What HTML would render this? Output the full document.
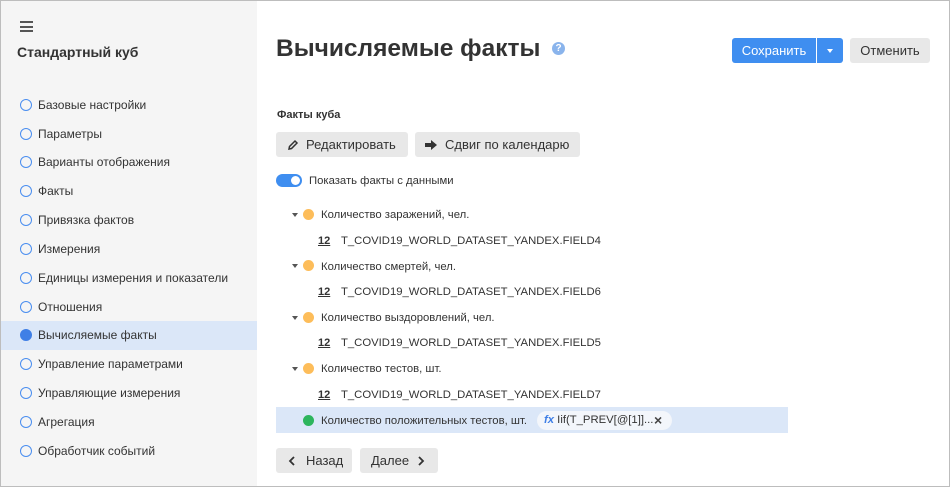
<!DOCTYPE html><html><head><meta charset="utf-8"><style>
*{box-sizing:border-box;margin:0;padding:0}
body{width:950px;height:487px;font-family:"Liberation Sans",sans-serif;color:#333;background:#fff;position:relative;overflow:hidden}
.frame{position:absolute;inset:0;border:1px solid #bdbdbd;pointer-events:none;z-index:9}
.side{position:absolute;left:0;top:0;width:257px;height:487px;background:#f5f5f5}
.ham{position:absolute;left:20px;top:21px;width:13px}
.ham i{display:block;height:2px;background:#555;margin-bottom:2.5px}
.st{position:absolute;left:17px;top:44px;font-size:14px;font-weight:bold;color:#333}
.it{position:absolute;left:0;width:257px;height:29px;font-size:12px;line-height:29px;padding-left:38px;color:#333}
.it:before{content:"";position:absolute;left:20px;top:8px;width:10px;height:10px;border:1.3px solid #4a8ef0;border-radius:50%}
.it.a{background:#dbe7f8}.it.a:before{background:#3f7fe6;border-color:#3f7fe6}
.t{position:absolute;font-size:12px;white-space:nowrap}
.btn{position:absolute;background:#e8e8e8;border-radius:3px;font-size:13px;line-height:25px;height:25px;color:#333}
.dot{position:absolute;width:11px;height:11px;border-radius:50%;background:#fdbd5a}
.arr{position:absolute;width:0;height:0;border-left:3px solid transparent;border-right:3px solid transparent;border-top:4px solid #555}
.n12{position:absolute;font-size:11px;font-weight:bold;text-decoration:underline;color:#333}
.f{font-size:11.3px}
</style></head><body>
<div class="side">
<div class="ham"><i></i><i></i><i></i></div>
<div class="st">Стандартный куб</div>
<div class="it" style="top:91px">Базовые настройки</div>
<div class="it" style="top:120px">Параметры</div>
<div class="it" style="top:148px">Варианты отображения</div>
<div class="it" style="top:177px">Факты</div>
<div class="it" style="top:206px">Привязка фактов</div>
<div class="it" style="top:235px">Измерения</div>
<div class="it" style="top:264px">Единицы измерения и показатели</div>
<div class="it" style="top:293px">Отношения</div>
<div class="it a" style="top:321px">Вычисляемые факты</div>
<div class="it" style="top:350px">Управление параметрами</div>
<div class="it" style="top:379px">Управляющие измерения</div>
<div class="it" style="top:408px">Агрегация</div>
<div class="it" style="top:437px">Обработчик событий</div>
</div>
<div class="t" style="left:276px;top:35px;font-size:24.5px;font-weight:bold;color:#333">Вычисляемые факты</div>
<div style="position:absolute;left:552px;top:42px;width:13px;height:13px;border-radius:50%;background:#8ab4ec;color:#fff;font-size:10px;font-weight:bold;text-align:center;line-height:13px">?</div>
<div class="btn" style="left:732px;top:38px;width:84px;background:#3f8ef0;color:#fff;text-align:center;border-radius:3px 0 0 3px">Сохранить</div>
<div class="btn" style="left:817px;top:38px;width:26px;background:#3f8ef0;border-radius:0 3px 3px 0"><div class="arr" style="left:10px;top:11px;border-top-color:#fff"></div></div>
<div class="btn" style="left:850px;top:38px;width:80px;text-align:center">Отменить</div>
<div class="t" style="left:277px;top:109px;font-size:11px;font-weight:bold">Факты куба</div>
<div class="btn" style="left:276px;top:132px;width:132px;padding-left:30px">Редактировать
<svg style="position:absolute;left:11px;top:7px" width="12" height="12" viewBox="0 0 12 12"><path d="M2 10l.5-2.5L8 2l2 2-5.5 5.5z" fill="none" stroke="#333" stroke-width="1.5"/></svg></div>
<div class="btn" style="left:415px;top:132px;width:165px;padding-left:30px">Сдвиг по календарю
<svg style="position:absolute;left:10px;top:8px" width="12" height="10" viewBox="0 0 12 10"><path d="M0 3h6V0l6 5-6 5V7H0z" fill="#333"/></svg></div>
<div style="position:absolute;left:276px;top:174px;width:26px;height:13px;border-radius:7px;background:#3f8ef0"><div style="position:absolute;right:2px;top:2px;width:9px;height:9px;border-radius:50%;background:#fff"></div></div>
<div class="t f" style="left:309px;top:175px">Показать факты с данными</div>

<div class="arr" style="left:292px;top:213px"></div><div class="dot" style="left:303px;top:209px"></div>
<div class="t f" style="left:321px;top:209px">Количество заражений, чел.</div>
<div class="n12" style="left:318px;top:235px">12</div><div class="t f" style="left:341px;top:235px">T_COVID19_WORLD_DATASET_YANDEX.FIELD4</div>

<div class="arr" style="left:292px;top:264px"></div><div class="dot" style="left:303px;top:260px"></div>
<div class="t f" style="left:321px;top:261px">Количество смертей, чел.</div>
<div class="n12" style="left:318px;top:286px">12</div><div class="t f" style="left:341px;top:286px">T_COVID19_WORLD_DATASET_YANDEX.FIELD6</div>

<div class="arr" style="left:292px;top:316px"></div><div class="dot" style="left:303px;top:312px"></div>
<div class="t f" style="left:321px;top:312px">Количество выздоровлений, чел.</div>
<div class="n12" style="left:318px;top:337px">12</div><div class="t f" style="left:341px;top:337px">T_COVID19_WORLD_DATASET_YANDEX.FIELD5</div>

<div class="arr" style="left:292px;top:367px"></div><div class="dot" style="left:303px;top:363px"></div>
<div class="t f" style="left:321px;top:363px">Количество тестов, шт.</div>
<div class="n12" style="left:318px;top:389px">12</div><div class="t f" style="left:341px;top:389px">T_COVID19_WORLD_DATASET_YANDEX.FIELD7</div>

<div style="position:absolute;left:276px;top:407px;width:512px;height:26px;background:#dbe7f8"></div>
<div class="dot" style="left:303px;top:415px;background:#2db55d"></div>
<div class="t f" style="left:321px;top:415px">Количество положительных тестов, шт.</div>
<div style="position:absolute;left:537px;top:411px;width:135px;height:19px;border-radius:10px;background:#f3f6fb;font-size:11.3px;line-height:19px;padding-left:7px;white-space:nowrap"><i style="color:#3f7fe6;font-weight:bold">fx</i> Iif(T_PREV[@[1]]...<span style="position:absolute;left:117px;font-size:14px;font-weight:bold;color:#444">×</span></div>

<div class="btn" style="left:276px;top:448px;width:76px;padding-left:30px">Назад<svg style="position:absolute;left:12px;top:8px" width="8" height="10" viewBox="0 0 8 10"><path d="M6 1L2 5l4 4" fill="none" stroke="#333" stroke-width="1.8"/></svg></div>
<div class="btn" style="left:360px;top:448px;width:78px;padding-left:11px">Далее<svg style="position:absolute;left:57px;top:8px" width="8" height="10" viewBox="0 0 8 10"><path d="M2 1l4 4-4 4" fill="none" stroke="#333" stroke-width="1.8"/></svg></div>
<div class="frame"></div>
</body></html>
